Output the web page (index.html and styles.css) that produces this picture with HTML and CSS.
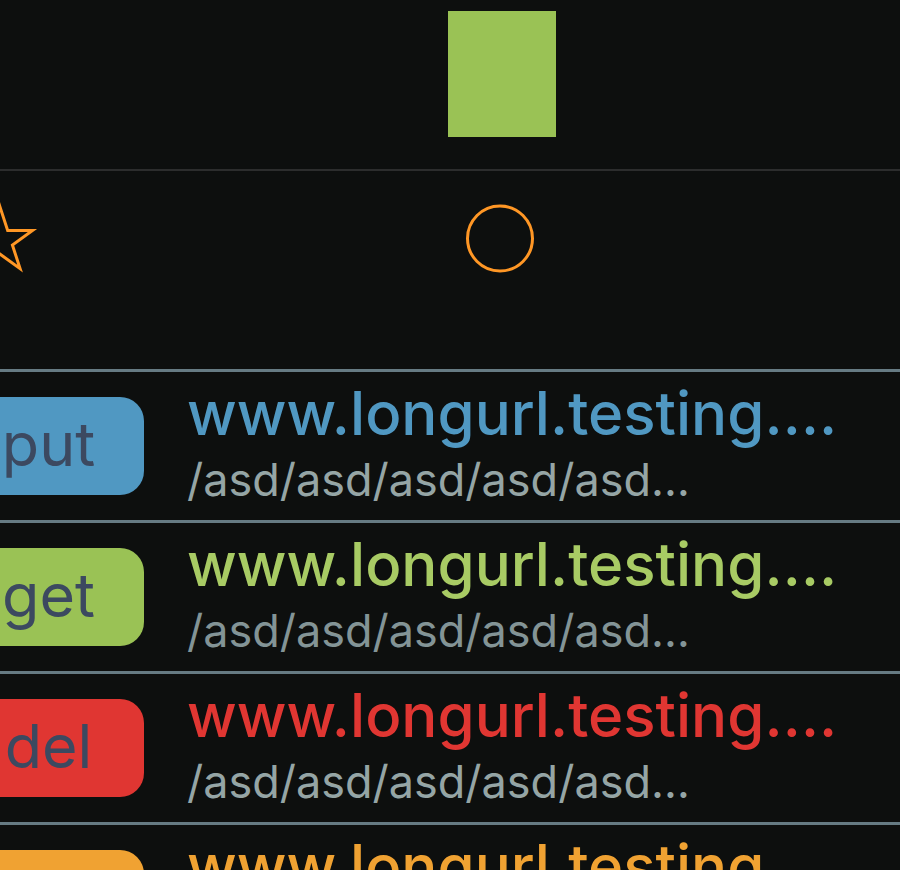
FILE: index.html
```html
<!DOCTYPE html>
<html lang="en">
<head>
<meta charset="utf-8">
<title>Requests</title>
<link rel="stylesheet" href="styles.css">
</head>
<body>
<header class="preview"><div class="swatch"></div></header>
<section class="shapes">
  <svg class="shape" viewBox="-40 -40 80 80" aria-hidden="true"><path d="M0-34.15 7.67-10.56H32.48L12.41 4.03 20.07 27.63 0 13.05-20.07 27.63-12.41 4.03-32.48-10.56H-7.67Z"/></svg>
  <svg class="shape" viewBox="-40 -40 80 80" aria-hidden="true"><circle cx="0" cy="-2.5" r="32.5"/></svg>
</section>
<ul class="requests">
  <li class="request put">
    <span class="method">put</span>
    <div class="address"><span class="host">www.longurl.testing….</span><span class="path">/asd/asd/asd/asd/asd…</span></div>
  </li>
  <li class="request get">
    <span class="method">get</span>
    <div class="address"><span class="host">www.longurl.testing….</span><span class="path">/asd/asd/asd/asd/asd…</span></div>
  </li>
  <li class="request del">
    <span class="method">del</span>
    <div class="address"><span class="host">www.longurl.testing….</span><span class="path">/asd/asd/asd/asd/asd…</span></div>
  </li>
  <li class="request post">
    <span class="method"></span>
    <div class="address"><span class="host">www.longurl.testing….</span></div>
  </li>
</ul>
</body>
</html>
```
FILE: styles.css
```css
* {
  box-sizing: border-box;
}

html {
  height: 100%;
  overflow: hidden;
  background: #0d0f0e;
}

body {
  margin: 0;
  height: 100%;
  overflow: hidden;
  font-family: Inter, "Liberation Sans", sans-serif;
}

.preview {
  display: flex;
  justify-content: center;
  padding: 11px 0 32px 104px;
  border-bottom: 2px solid #2c2d2d;
}

.swatch {
  width: 108px;
  height: 126px;
  background: #9ac255;
}

.shapes {
  display: grid;
  grid-template-columns: 500px 500px;
  justify-items: center;
  margin-left: -250px;
  padding: 30px 0 88px;
}

.shape {
  width: 80px;
  height: 80px;
  fill: none;
  stroke: #ff9725;
  stroke-width: 3;
  stroke-miterlimit: 10;
}

.requests {
  margin: 0 0 0 -47px;
  padding: 0;
  list-style: none;
}

.request {
  display: flex;
  align-items: flex-start;
  gap: 43px;
  height: 151px;
  border-top: 3px solid #667b83;
  white-space: nowrap;
}

.method {
  flex: none;
  width: 191px;
  height: 98px;
  margin-top: 25px;
  border-radius: 24px;
  background: var(--accent);
  color: #3c4960;
  font-size: 61px;
  line-height: 94px;
  text-align: center;
}

.address {
  display: flex;
  flex-direction: column;
  padding-top: 3px;
}

.host {
  color: var(--host, var(--accent));
  font-size: 60px;
  font-weight: 500;
  line-height: 76px;
}

.path {
  color: #95a5a5;
  font-size: 45px;
  line-height: 58px;
}

.put {
  --accent: #5098c2;
}

.get {
  --accent: #9ac255;
  --host: #a8cb64;
}

.get .path {
  color: #839496;
}

.del {
  --accent: #e03632;
}

.post {
  --accent: #f0a232;
}
```
